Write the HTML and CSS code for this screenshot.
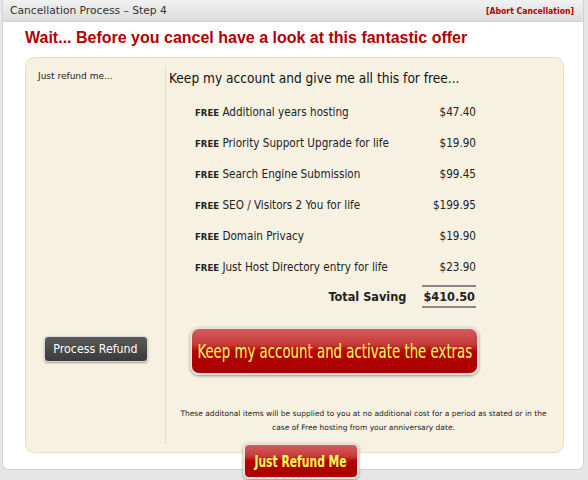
FILE: index.html
```html
<!DOCTYPE html>
<html>
<head>
<meta charset="utf-8">
<link rel="stylesheet" href="styles.css">
</head>
<body>
<div class="panel">
  <div class="bar">
    <span class="bar-title">Cancellation Process – Step 4</span>
    <a class="abort">[Abort Cancellation]</a>
  </div>
  <h1 class="title">Wait... Before you cancel have a look at this fantastic offer</h1>
  <div class="box">
    <div class="left">
      <div class="left-label">Just refund me...</div>
      <button class="btn-dark">Process Refund</button>
    </div>
    <div class="right">
      <div class="heading">Keep my account and give me all this for free...</div>
      <div class="rows">
        <div class="row"><span class="name"><b>FREE</b> Additional years hosting</span><span class="price">$47.40</span></div>
        <div class="row"><span class="name"><b>FREE</b> Priority Support Upgrade for life</span><span class="price">$19.90</span></div>
        <div class="row"><span class="name"><b>FREE</b> Search Engine Submission</span><span class="price">$99.45</span></div>
        <div class="row"><span class="name"><b>FREE</b> SEO / Visitors 2 You for life</span><span class="price">$199.95</span></div>
        <div class="row"><span class="name"><b>FREE</b> Domain Privacy</span><span class="price">$19.90</span></div>
        <div class="row"><span class="name"><b>FREE</b> Just Host Directory entry for life</span><span class="price">$23.90</span></div>
        <div class="total"><span class="total-label">Total Saving</span><span class="total-val">$410.50</span></div>
      </div>
      <button class="btn-red big"><span class="narrow">Keep my account and activate the extras</span></button>
      <p class="fine">These additonal items will be supplied to you at no additional cost for a period as stated or in the case of Free hosting from your anniversary date.</p>
    </div>
  </div>
  <div class="bottom">
    <button class="btn-red small"><span class="narrow">Just Refund Me</span></button>
  </div>
</div>
</body>
</html>
```
FILE: styles.css
```css
html, body { margin: 0; padding: 0; }
body {
  background: #e6e6e6;
  font-family: "DejaVu Sans Condensed", "DejaVu Sans", sans-serif;
  color: #222;
  width: 588px;
  height: 480px;
  overflow: hidden;
}
.panel {
  margin: 0 4px 0 2px;
  background: #fff;
  border: 1px solid #d2d2d2;
  border-top: none;
  border-radius: 0 0 6px 6px;
  height: 469px;
  position: relative;
}
.bar {
  height: 21px;
  background: linear-gradient(#f1f1f1, #dcdcdc);
  border-bottom: 1px solid #cfcfcf;
  display: flex;
  align-items: center;
  justify-content: space-between;
  padding: 0 9px 0 7px;
}
.bar-title { font-family: "DejaVu Sans", sans-serif; font-size: 10.7px; color: #333; }
.abort { font-size: 8.6px; font-weight: bold; color: #b40000; margin-top: 1px; }
.title {
  margin: 6px 0 0 22px;
  font-family: "Liberation Sans", sans-serif;
  font-size: 16px;
  font-weight: bold;
  color: #b00000;
  line-height: 20px;
}
.box {
  margin: 9px 19px 0 22px;
  height: 396px;
  background: #f7f1e2;
  border: 1px solid #e9dfbf;
  border-radius: 9px;
  display: flex;
  box-sizing: border-box;
  padding: 8px 0;
}
.left {
  width: 139px;
  border-right: 1px solid #e6ddc6;
  display: flex;
  flex-direction: column;
  align-items: center;
}
.left-label {
  align-self: flex-start;
  font-family: "DejaVu Sans", sans-serif;
  font-size: 9px;
  margin: 5px 0 0 12px;
  color: #222;
}
.btn-dark {
  margin-top: 255px;
  width: 104px;
  height: 26px;
  border: 1px solid #d8d8d8;
  border-radius: 4px;
  background: linear-gradient(#5a5a5a, #3a3a3a);
  color: #fff;
  font-family: "DejaVu Sans Condensed", sans-serif;
  font-size: 12.3px;
  box-shadow: 0 1px 2px rgba(0,0,0,0.35);
  padding: 0;
}
.right { flex: 1; display: flex; flex-direction: column; }
.heading {
  font-size: 13.6px;
  margin: 4px 0 0 3px;
  color: #111;
}
.rows { margin: 10px 0 0 29px; width: 281px; }
.row {
  display: flex;
  justify-content: space-between;
  height: 31px;
  align-items: center;
  font-size: 11.6px;
}
.row b { font-size: 9.5px; }
.total {
  display: flex;
  justify-content: flex-end;
  align-items: center;
  height: 29px;
  font-weight: bold;
  font-size: 12.6px;
}
.total-label { margin-right: 16px; }
.total-val {
  border-top: 2px solid #888;
  border-bottom: 2px solid #888;
  padding: 2px 1px;
}
.btn-red {
  background: linear-gradient(#d35c5c 0%, #c83a3a 35%, #b40000 52%, #aa0000 100%);
  color: #ffff5a;
  border: 2px solid #e8e0d8;
  font-family: "DejaVu Sans Condensed", sans-serif;
  box-shadow: 0 1px 3px rgba(0,0,0,0.4);
  padding: 0;
  white-space: nowrap;
  display: flex;
  align-items: center;
  justify-content: center;
}
.narrow { display: inline-block; transform: scaleX(0.76); }
.big {
  margin: 16px 0 0 24px;
  width: 289px;
  height: 48px;
  border-radius: 9px;
  font-size: 19.5px;
}
.fine {
  font-family: "DejaVu Sans", sans-serif;
  font-size: 7.5px;
  text-align: center;
  margin: 32px 8px 0 6px;
  line-height: 14px;
  color: #222;
}
.bottom {
  position: absolute;
  left: 240px;
  top: 443px;
}
.small {
  width: 116px;
  height: 36px;
  border-radius: 6px;
  font-size: 16px;
  font-weight: bold;
}
.small .narrow { transform: scaleX(0.75); }
```
